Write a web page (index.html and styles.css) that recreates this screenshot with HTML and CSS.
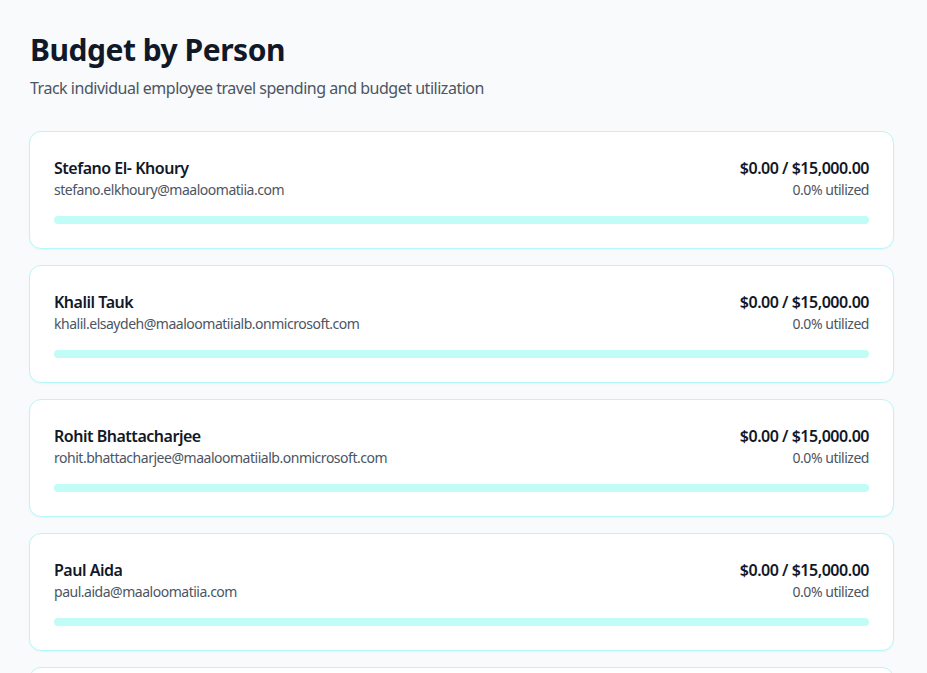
FILE: index.html
```html
<!DOCTYPE html>
<html>
<head>
<meta charset="utf-8">
<link rel="stylesheet" href="styles.css">
</head>
<body>
<main class="page">
  <header class="head">
    <h1 class="title">Budget by Person</h1>
    <p class="subtitle">Track individual employee travel spending and budget utilization</p>
  </header>
  <section class="list">
    <article class="card">
      <div class="row">
        <div class="who">
          <div class="name">Stefano El- Khoury</div>
          <div class="email">stefano.elkhoury@maaloomatiia.com</div>
        </div>
        <div class="amt">
          <div class="money">$0.00 / $15,000.00</div>
          <div class="util">0.0% utilized</div>
        </div>
      </div>
      <div class="bar"><div class="fill" style="width:0%"></div></div>
    </article>
    <article class="card">
      <div class="row">
        <div class="who">
          <div class="name">Khalil Tauk</div>
          <div class="email">khalil.elsaydeh@maaloomatiialb.onmicrosoft.com</div>
        </div>
        <div class="amt">
          <div class="money">$0.00 / $15,000.00</div>
          <div class="util">0.0% utilized</div>
        </div>
      </div>
      <div class="bar"><div class="fill" style="width:0%"></div></div>
    </article>
    <article class="card">
      <div class="row">
        <div class="who">
          <div class="name">Rohit Bhattacharjee</div>
          <div class="email">rohit.bhattacharjee@maaloomatiialb.onmicrosoft.com</div>
        </div>
        <div class="amt">
          <div class="money">$0.00 / $15,000.00</div>
          <div class="util">0.0% utilized</div>
        </div>
      </div>
      <div class="bar"><div class="fill" style="width:0%"></div></div>
    </article>
    <article class="card">
      <div class="row">
        <div class="who">
          <div class="name">Paul Aida</div>
          <div class="email">paul.aida@maaloomatiia.com</div>
        </div>
        <div class="amt">
          <div class="money">$0.00 / $15,000.00</div>
          <div class="util">0.0% utilized</div>
        </div>
      </div>
      <div class="bar"><div class="fill" style="width:0%"></div></div>
    </article>
    <article class="card card-peek"></article>
  </section>
</main>
</body>
</html>
```

FILE: styles.css
```css
html, body {
  margin: 0;
  padding: 0;
}
body {
  background: #f9fafb;
  font-family: "Noto Sans", "Open Sans", sans-serif;
  letter-spacing: -0.03em;
  color: #111827;
  overflow: hidden;
}
.page {
  padding: 32px 33px 32px 29px;
}
.head {
  padding-left: 1px;
  margin-bottom: 31px;
}
.title {
  margin: 0;
  font-size: 30px;
  line-height: 36px;
  font-weight: 700;
  color: #111827;
}
.subtitle {
  margin: 8px 0 0;
  font-size: 16px;
  line-height: 24px;
  color: #4b5563;
}
.list {
  display: flex;
  flex-direction: column;
  gap: 16px;
}
.card {
  background: #fff;
  border: 1px solid #b6f7fb;
  border-radius: 12px;
  padding: 24px;
  box-shadow: 0 1px 2px rgba(0,0,0,0.04);
}
.card-peek {
  height: 68px;
}
.row {
  display: flex;
  justify-content: space-between;
  align-items: flex-start;
  margin-bottom: 16px;
}
.name {
  font-size: 16px;
  line-height: 24px;
  font-weight: 600;
  color: #111827;
}
.email, .util {
  font-size: 14px;
  line-height: 20px;
  color: #4b5563;
}
.amt {
  text-align: right;
}
.money {
  font-size: 16px;
  line-height: 24px;
  font-weight: 600;
  color: #111827;
}
.bar {
  height: 8px;
  border-radius: 999px;
  background: #c2fcf7;
  overflow: hidden;
}
.fill {
  height: 100%;
  background: #06b6d4;
}
```
